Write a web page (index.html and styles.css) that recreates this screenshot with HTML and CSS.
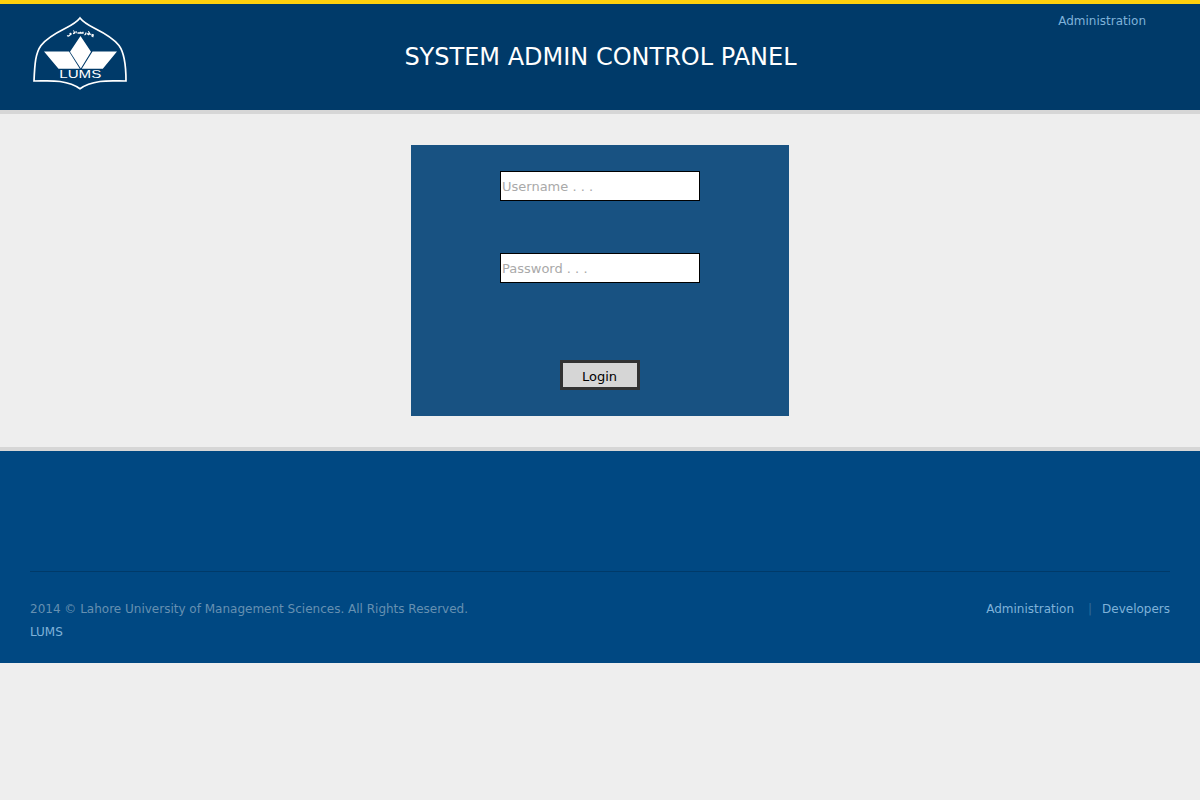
FILE: index.html
```html
<!DOCTYPE html>
<html lang="en">
<head>
<meta charset="utf-8">
<title>System Admin Control Panel</title>
<link rel="stylesheet" href="styles.css">
</head>
<body>
<header class="header">
  <svg class="logo" viewBox="25 10 110 85" role="img" aria-label="LUMS">
    <path class="logo-shield" d="M80 18C76.500 22.500 71 25.500 65 28.500C55 33.500 46.500 38.500 41 45.500C35.500 53 34.700 64 34 81C43 81 52 80.300 60 81.500C68 82.700 75 85 80 88.700C85 85 92 82.700 100 81.500C108 80.300 117 81 126 81C126 64 124.500 53 119 45.500C113.500 38.500 105 33.500 95 28.500C89 25.500 83.500 22.500 80 18Z"/>
    <path class="logo-fill" d="M80.500 36L91 51.700L80.800 68.500L70 51.700ZM44 51.400H69L79.800 68.800H58.500ZM92.500 51.400H117L102.800 68.800H81.800Z"/>
    <path class="logo-script" d="M67.300 35.300q.8 1.200 2 .3l1.800-1.500q-.5-1.300-1.500-.3M73 33.500l1.300-.2.200-1.800M76 33.200l.2-2M77.500 33h5.500v-1.200M80.500 32.700v-.9M84.500 35q1.500-.6 1.500-2.500M87 33.500l1.500 1 .7-1.600 1.300 2M91.500 34.500l1.700.4-.4 1.500-1.500-.9M73.300 30.800h.8M88 31.700h.8"/>
    <text class="logo-text" x="59.300" y="78" textLength="42" lengthAdjust="spacingAndGlyphs">LUMS</text>
  </svg>
  <h1 class="title">SYSTEM ADMIN CONTROL PANEL</h1>
  <nav class="top-nav"><a class="link">Administration</a></nav>
</header>
<main class="main">
  <form class="login">
    <input class="field" type="text" placeholder="Username . . .">
    <input class="field field-password" type="password" placeholder="Password . . .">
    <button class="submit" type="button">Login</button>
  </form>
</main>
<footer class="footer">
  <div class="footer-row">
    <div class="copyright">2014 © Lahore University of Management Sciences. All Rights Reserved.<br><a class="link">LUMS</a></div>
    <nav class="footer-nav"><a class="link">Administration</a><span class="divider">|</span><a class="link">Developers</a></nav>
  </div>
</footer>
</body>
</html>
```
FILE: styles.css
```css
* { box-sizing: border-box; }
body {
  margin: 0;
  background: #eee;
  font: 12px/23px "DejaVu Sans", sans-serif;
}
.header {
  display: grid;
  grid-template-columns: 1fr auto 1fr;
  height: 114px;
  border-top: 4px solid #ffd00d;
  border-bottom: 4px solid #d6d6d6;
  background: #003a69;
}
.logo { width: 110px; height: 85px; margin: 6px 0 0 25px; }
.logo-shield { fill: none; stroke: #fff; stroke-width: 1.7; }
.logo-fill { fill: #fff; }
.logo-script { fill: none; stroke: #fff; stroke-width: 1.3; }
.logo-text { fill: #fff; font: 11px "Liberation Sans", sans-serif; }
.title {
  margin: 38px 0 0;
  padding-left: 1px;
  color: #fff;
  font-size: 24px;
  font-weight: normal;
  line-height: 30px;
}
.top-nav { padding: 6px 54px 0 0; text-align: right; }
.link { color: #7fb2d9; }
.main { padding: 31px 0; border-bottom: 4px solid #d6d6d6; }
.login {
  display: flex;
  flex-direction: column;
  align-items: center;
  width: 378px;
  height: 271px;
  margin: 0 auto;
  padding-top: 26px;
  background: #185282;
}
.field {
  width: 200px;
  height: 30px;
  padding: 1px;
  border: 1px solid #000;
  border-radius: 0;
  background: #fff;
  font: 13px "DejaVu Sans", sans-serif;
}
.field::placeholder { color: #a9a9a9; opacity: 1; }
.field-password { margin-top: 52px; }
.submit {
  width: 80px;
  height: 30px;
  margin-top: 77px;
  padding: 2px 1px 0 0;
  border: 3px solid #333;
  background: #d6d6d6;
  color: #000;
  font: 13px "DejaVu Sans", sans-serif;
}
.footer { height: 212px; padding: 120px 30px 0; background: #004882; }
.footer-row {
  display: flex;
  justify-content: space-between;
  padding-top: 26px;
  border-top: 1px solid #003a69;
}
.copyright { color: #6690b1; }
.footer-nav { display: flex; }
.divider { margin: 0 10px 0 14px; color: #336d9b; }
```
